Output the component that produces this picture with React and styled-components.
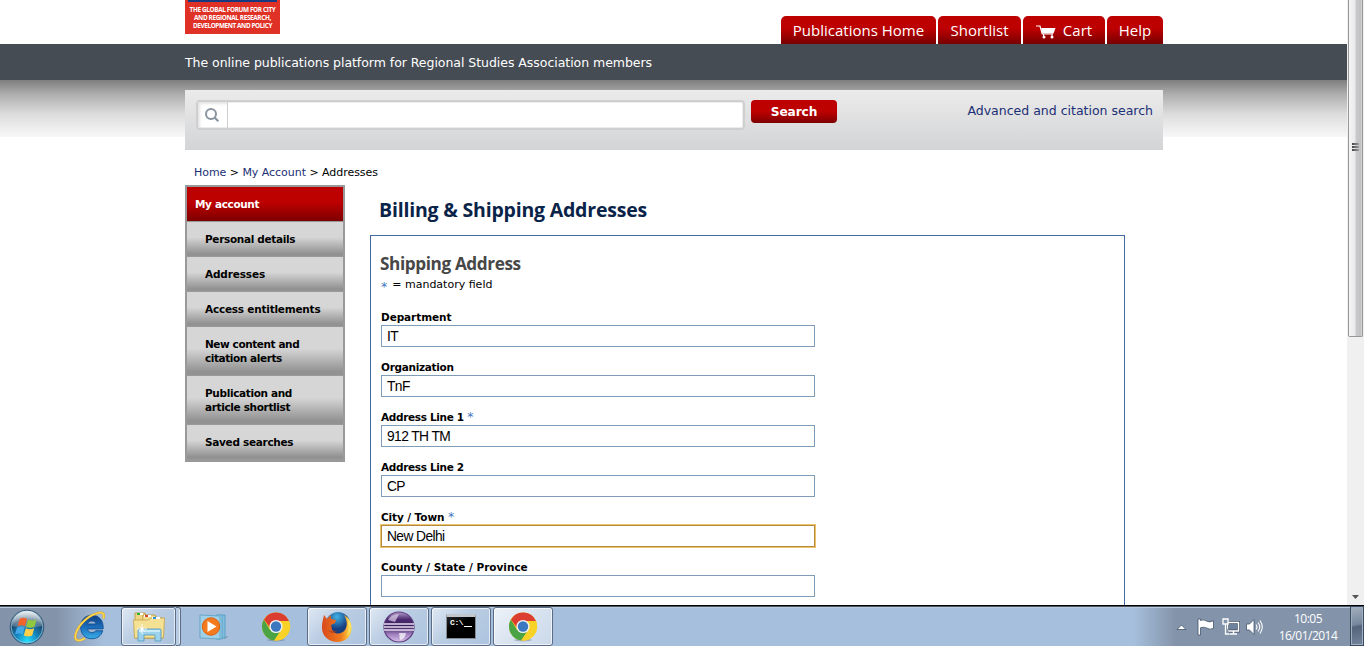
import React from "react";
import styled, { createGlobalStyle } from "styled-components";

const Global = createGlobalStyle`
  * { box-sizing: border-box; }
  body { margin: 0; background: #fff; overflow: hidden; font-family: "DejaVu Sans", sans-serif; }
  a { text-decoration: none; color: inherit; }
`;

const Screen = styled.div`
  width: 1364px;
  height: 666px;
  background: #fff;
  overflow: hidden;
`;
const Viewport = styled.div`
  display: flex;
  height: 605px;
  overflow: hidden;
`;
const Page = styled.div`
  width: 1347px;
  flex: none;
`;
const Container = styled.div`
  width: 978px;
  margin-left: 185px;
`;
const TopBar = styled(Container)`
  height: 44px;
  display: flex;
  justify-content: space-between;
  align-items: flex-start;
`;
const Logo = styled.div`
  width: 95px;
  height: 34px;
  background: #e03127;
  color: #fff;
  text-align: center;
  font: bold 6.4px/8px "Open Sans", sans-serif;
  padding: 0 3px;
  white-space: nowrap;
`;
const LogoRule = styled.div`
  height: 2px;
  background: #17397f;
  margin-bottom: 4px;
`;
const LogoLine = styled.div`
  letter-spacing: ${(p) => p.$ls || 0}px;
`;
const Nav = styled.nav`
  display: flex;
  gap: 2px;
  padding-top: 16px;
`;
const Tab = styled.a`
  width: ${(p) => p.$w}px;
  height: 28px;
  display: flex;
  align-items: center;
  justify-content: center;
  gap: 7px;
  padding-bottom: 1px;
  border-radius: 5px 5px 0 0;
  background: linear-gradient(#bd0000 0 45%, #7d0000 95%);
  color: #fff;
  font: 15px/20px "Open Sans", sans-serif;
  white-space: nowrap;
`;
const Strap = styled.div`
  height: 36px;
  background: #464c54;
  color: #fff;
  font-size: 12.5px;
  line-height: 37px;
  padding-left: 185px;
  letter-spacing: -0.04px;
`;
const SearchBand = styled.div`
  height: 70px;
  padding-top: 10px;
  background: linear-gradient(#7e7e7e, #adadad 14px, #dcdcdc 34px, #f8f8f8 57px, #fff 57px);
`;
const SearchPanel = styled(Container)`
  height: 60px;
  padding: 10px 10px 0 11px;
  display: flex;
  align-items: flex-start;
  background: linear-gradient(#ebebeb, #d3d4d6);
`;
const SearchField = styled.div`
  width: 549px;
  height: 30px;
  display: flex;
  border: 2px solid #cfcfcf;
  border-radius: 4px;
  background: #fff;
  box-shadow: inset 0 0 0 1px #ececec;
`;
const SearchIcon = styled.div`
  width: 30px;
  border-right: 1px solid #d0d0d0;
  box-shadow: inset 2px 2px 3px #e4e4e4;
  display: flex;
  align-items: center;
  justify-content: center;
  padding-right: 2px;
`;
const SearchButton = styled.div`
  width: 86px;
  height: 23px;
  margin-left: 6px;
  padding-top: 1px;
  border-radius: 4px;
  background: linear-gradient(#bd0000 0 50%, #7d0000);
  color: #fff;
  font: bold 12.2px/22px "DejaVu Sans", sans-serif;
  letter-spacing: -0.1px;
  text-align: center;
`;
const Advanced = styled.a`
  margin-left: auto;
  font-size: 12.5px;
  line-height: 22px;
  color: #1b2f75;
`;
const Crumbs = styled(Container)`
  height: 35px;
  padding: 15px 0 0 9px;
  font-size: 11px;
  line-height: 15px;
  color: #000;
  white-space: pre;
  letter-spacing: -0.04px;
  a { color: #1b2f75; }
`;
const Columns = styled(Container)`
  display: flex;
  align-items: flex-start;
`;
const Side = styled.ul`
  width: 160px;
  margin: 0;
  padding: 0;
  list-style: none;
  border: 2px solid #999;
`;
const SideItem = styled.li`
  padding: 10px 8px 10px ${(p) => (p.$head ? 8 : 18)}px;
  font-weight: bold;
  font-size: 10.5px;
  line-height: 14px;
  letter-spacing: ${(p) => p.$ls}px;
  white-space: pre;
  color: ${(p) => (p.$head ? "#fff" : "#000")};
  border-bottom: 1px solid #999;
  background: ${(p) =>
    p.$head
      ? "linear-gradient(#bd0000 0 45%, #7d0000)"
      : "linear-gradient(#d6d6d6 0 45%, #929292 93%, #929292)"};
`;
const Main = styled.main`
  width: 755px;
  margin-left: 25px;
`;
const Title = styled.h1`
  margin: 0;
  height: 50px;
  padding-left: 9px;
  font: bold 19.5px/50px "Open Sans", sans-serif;
  color: #0a2348;
  letter-spacing: -0.2px;
`;
const Panel = styled.section`
  border: 1px solid #416a9f;
  height: 420px;
  padding: 16px 10px 0;
`;
const Heading = styled.h2`
  margin: 0 0 0 -1px;
  font: bold 17.2px/24px "Open Sans", sans-serif;
  letter-spacing: -0.4px;
  color: #474747;
`;
const Note = styled.p`
  display: flex;
  gap: 5px;
  margin: 1px 0 17px;
  height: 16px;
  font-size: 11px;
  line-height: 16px;
`;
const Star = styled.span`
  color: #3f78c0;
  font-weight: normal;
  font-size: 12.5px;
  line-height: ${(p) => p.$lh || 12}px;
  letter-spacing: 0;
`;
const Field = styled.label`
  display: block;
  height: 50px;
`;
const Label = styled.div`
  height: 15px;
  font-weight: bold;
  font-size: 10.5px;
  line-height: 14px;
  letter-spacing: ${(p) => p.$ls}px;
`;
const Input = styled.div`
  width: 434px;
  height: 22px;
  border: 1px solid ${(p) => (p.$focus ? "#b58b3f" : "#7f9db9")};
  box-shadow: ${(p) => (p.$focus ? "0 0 0 1px #efc36c" : "none")};
  padding-left: 5px;
  font: 13.8px/21px "Liberation Sans", sans-serif;
  letter-spacing: -0.6px;
  color: #000;
`;
const ScrollTrack = styled.div`
  width: 17px;
  background: #f0f0f0;
  display: flex;
  flex-direction: column;
  align-items: center;
  justify-content: space-between;
`;
const Thumb = styled.div`
  width: 15px;
  height: 337px;
  border: 1px solid #979797;
  border-top: 0;
  border-radius: 0 0 2px 2px;
  background: linear-gradient(90deg, #f5f5f5, #e9e9eb 45%, #c9c9cc 55%, #c2c2c5 90%, #dcdcdc);
  display: flex;
  flex-direction: column;
  align-items: center;
  gap: 1px;
  padding-top: 143px;
`;
const Grip = styled.i`
  width: 7px;
  height: 2px;
  background: linear-gradient(90deg, #444, #a0a0a0);
`;
const Taskbar = styled.div`
  display: flex;
  height: 41px;
  border-top: 1px solid #000;
  box-shadow: inset 0 1px 0 #4a5463, inset 0 2px 0 #bccbdc;
  background: linear-gradient(90deg, #8393a9 0 56px, #a5bfdc 104px 1134px, #8393a9 1176px);
`;
const Slot = styled.div`
  width: ${(p) => p.$w}px;
  flex: none;
  display: flex;
  align-items: center;
  justify-content: center;
  padding-top: 2px;
  padding-left: ${(p) => p.$shift || 0}px;
`;
const TaskButton = styled(Slot)`
  height: 39px;
  margin: 1px 1px 0;
  padding-top: 1px;
  border: 1px solid #5b6c84;
  border-radius: 3px;
  box-shadow: inset 0 0 0 1px rgba(255, 255, 255, 0.65);
  background: ${(p) =>
    p.$active
      ? "linear-gradient(135deg, #eef3f9, #d9e3f0 50%, #cbd9ea)"
      : "linear-gradient(135deg, #dfe8f3, #b9cce2 45%, #adc4df)"};
`;
const StackEdge = styled.div`
  width: 5px;
  height: 39px;
  margin: 1px 0 0 -1px;
  border: 1px solid #5b6c84;
  border-left: 0;
  border-radius: 0 3px 3px 0;
  background: #b7cbe2;
  box-shadow: inset -1px 0 0 rgba(255, 255, 255, 0.6);
`;
const Tray = styled.div`
  margin-left: auto;
  display: flex;
  align-items: center;
`;
const Clock = styled.div`
  width: 87px;
  margin-top: 2px;
  padding-left: 3px;
  text-align: center;
  color: #fff;
  font: 12px/17px "Open Sans", sans-serif;
  letter-spacing: -0.5px;
`;
const ShowDesktop = styled.div`
  width: 14px;
  height: 40px;
  border: 1px solid #39495f;
  box-shadow: inset 0 0 0 1px #a3b0c2;
  background: linear-gradient(170deg, #a2aebd, #77889d 46%, #53647b 52%, #73859c);
`;

const CartSvg = styled.svg`
  margin-top: 5px;
`;
const Cart = () => (
  <CartSvg width="20" height="14" viewBox="0 0 20 14">
    <path d="M0 1h4l2.200 8H17" fill="none" stroke="#fff" strokeWidth="1.200" />
    <path d="M5 3h14.500l-2 5.500H6.500z" fill="#fff" />
    <path d="M7.500 9v2M16 9v2" stroke="#fff" />
    <circle cx="8" cy="12" r="1.500" fill="#fff" />
    <circle cx="16" cy="12" r="1.500" fill="#fff" />
  </CartSvg>
);
const Lens = () => (
  <svg width="16" height="16" viewBox="0 0 16 16" fill="none" stroke="#89949f">
    <circle cx="7" cy="7" r="5" strokeWidth="2" />
    <path d="M10.500 10.500l3.800 3.800" strokeWidth="2.200" />
  </svg>
);
const StartOrb = () => (
  <svg width="36" height="36" viewBox="0 0 36 36">
    <defs>
      <radialGradient id="orb" cx="50%" cy="92%" r="85%">
        <stop offset="0" stopColor="#23e0ff" />
        <stop offset=".4" stopColor="#1583bd" />
        <stop offset=".75" stopColor="#1c4569" />
        <stop offset="1" stopColor="#8da9ba" />
      </radialGradient>
      <linearGradient id="orbTop" x1="0" y1="0" x2="0" y2="1">
        <stop offset="0" stopColor="#fff" stopOpacity=".75" />
        <stop offset="1" stopColor="#fff" stopOpacity=".15" />
      </linearGradient>
    </defs>
    <circle cx="18" cy="18" r="16.800" fill="url(#orb)" stroke="#345875" />
    <circle cx="18" cy="18" r="15.800" fill="none" stroke="#a4d3e5" strokeOpacity=".7" />
    <path d="M3 17a15 15 0 0 1 30 0q-15 4-30 0z" fill="url(#orbTop)" />
    <path d="M10.500 10q4-2.500 7.500 0l-2 7.300q-3.500-2.300-7.500 0z" fill="#f0642c" />
    <path d="M19 10.500q4 2.200 8.500 0l-2 7.300q-4 2-8.500 0z" fill="#92c83e" />
    <path d="M8 18.600q4-2.300 7.600 0l-2 7q-3.500-2.300-7.600 0z" fill="#41a9e8" />
    <path d="M16.800 19.200q4 2.200 8.400 0l-2 7.300q-4 2-8.400 0z" fill="#fdd04a" />
  </svg>
);
const Explorer = () => (
  <svg width="34" height="32" viewBox="0 0 34 32">
    <path d="M3 2h10l1 3h10v22H3z" fill="#efd583" stroke="#b8963a" strokeWidth=".8" />
    <path d="M11 4h12l1 3h7v20H9z" fill="#f4df93" stroke="#b8963a" strokeWidth=".8" />
    <path d="M1.500 9h15l2-2h14l-1 20H2.500z" fill="#f5e193" stroke="#c3a24b" strokeWidth=".8" />
    <path d="M5 2h6v2H5zM12 4h7v2h-7zM20 6h8v2h-8z" fill="#fff" />
    <path d="M5 2h3v2H5z" fill="#2daf36" />
    <path d="M13 4h3v2h-3z" fill="#d8442c" />
    <path d="M21 6h3v2h-3z" fill="#2f8fd8" />
    <path d="M6 30V19q0-1 1-1h21q1 0 1 1v11h-6v-6H12v6z" fill="#9bd2ec" stroke="#5c9dbf" strokeWidth=".9" />
    <path d="M7 20h21" stroke="#d9f2fb" strokeWidth="1.500" />
    <path d="M10 13v10M5 18h10" stroke="#fff" strokeWidth=".9" />
    <path d="M7 15l6 6M13 15l-6 6" stroke="#fff" strokeWidth=".5" />
    <circle cx="10" cy="18" r="1.500" fill="#fff" />
  </svg>
);
const IE = () => (
  <svg width="32" height="32" viewBox="0 0 34 34">
    <defs>
      <linearGradient id="ie" x1="0" y1="0" x2="0" y2="1">
        <stop offset="0" stopColor="#123f80" />
        <stop offset=".5" stopColor="#1b6cba" />
        <stop offset="1" stopColor="#38aee8" />
      </linearGradient>
    </defs>
    <path
      d="M19 4.500C11.500 4.500 7 10 7 16.800 7 24.500 12 29.500 19 29.500c5.500 0 10-3 11.500-8.500h-7.500c-1 1.500-2.300 2-4 2-2.600 0-4.200-1.500-4.500-4H31C31.500 10.500 27 4.500 19 4.500zm-4.500 9.300c.5-2 2.200-3.200 4.500-3.200s4 1.200 4.500 3.200z"
      fill="url(#ie)"
      stroke="#0f4d93"
      strokeWidth=".9"
    />
    <path
      d="M31 8c2.500-5-1-8-8-5C13 6 3 17 1.500 26c-1 6 4 7 10 3"
      fill="none"
      stroke="#d69f25"
      strokeWidth="2.600"
    />
    <path
      d="M31 8c2.500-5-1-8-8-5C13 6 3 17 1.500 26c-1 6 4 7 10 3"
      fill="none"
      stroke="#fbdc55"
      strokeWidth="1.500"
    />
  </svg>
);
const MediaPlayer = () => (
  <svg width="32" height="28" viewBox="0 0 32 28">
    <path d="M22 24l8-1-4 3z" fill="#60748b" opacity=".4" />
    <path d="M20 2h6v23h-6z" fill="#83bfdd" stroke="#4e9bc3" strokeWidth=".8" />
    <path d="M17 2h6v24h-6z" fill="#9bd0e8" stroke="#4e9bc3" strokeWidth=".8" />
    <path d="M1 2l20 1v23L1 25z" fill="#9fd0e7" stroke="#559fc5" strokeWidth=".8" />
    <circle cx="12" cy="13.500" r="8.700" fill="#f37a1f" stroke="#dc600d" />
    <path d="M8.500 8v11l9-5.500z" fill="#fff" />
  </svg>
);
const Chrome = () => (
  <svg width="30" height="30" viewBox="0 0 30 30">
    <ellipse cx="15" cy="28" rx="9" ry="1.500" fill="#506078" opacity=".35" />
    <circle cx="15" cy="14.500" r="14" fill="#f7cf24" />
    <path d="M2.880 7.500 A14 14 0 0 0 13.200 28.400 L20.500 17.800 15 14.500 9 18z" fill="#4aa446" />
    <path d="M13.200 28.400 A14 14 0 0 0 28 9 H15 V14.500 L20.600 17.500z" fill="#f8d227" />
    <path d="M3 7.500 A14 14 0 0 1 28 9 H15 a6 6 0 0 0-5.800 7z" fill="#db3d30" />
    <circle cx="15" cy="14.500" r="6.600" fill="#f4f4f4" />
    <circle cx="15" cy="14.500" r="5.200" fill="#3c78bf" />
  </svg>
);
const Firefox = () => (
  <svg width="32" height="32" viewBox="0 0 32 32">
    <defs>
      <linearGradient id="fox" x1="0" y1="0" x2="1" y2="0">
        <stop offset="0" stopColor="#d9491c" />
        <stop offset=".65" stopColor="#ef7d1d" />
        <stop offset="1" stopColor="#fde04a" />
      </linearGradient>
      <radialGradient id="globe" cx="45%" cy="20%">
        <stop offset="0" stopColor="#41b1e4" />
        <stop offset="1" stopColor="#153f83" />
      </radialGradient>
    </defs>
    <circle cx="17" cy="13" r="12" fill="url(#globe)" />
    <path
      d="M3 4l3 4 4-4v4l5 1-1 3-4 2c1 2 0 4 2 6 3 4 9 3 12-1 3-5 2-10-1-15 5 3 8 8 7.500 14C30 26 24 31 16.500 31 8 31 1 25 1 17 1 11 2 9 3 4z"
      fill="url(#fox)"
    />
    <path d="M7 19c3 2 6 0 9 1-3 3-6 3-9-1z" fill="#a63816" opacity=".6" />
    <path d="M26 6c5 5 5 14 0 19 2-6 2-13 0-19z" fill="#fce56a" opacity=".8" />
  </svg>
);
const Eclipse = () => (
  <svg width="32" height="32" viewBox="0 0 32 32">
    <defs>
      <linearGradient id="ecl" x1="0" y1="0" x2="0" y2="1">
        <stop offset="0" stopColor="#b29bc7" />
        <stop offset=".25" stopColor="#4c2a70" />
        <stop offset=".5" stopColor="#3b1d5c" />
        <stop offset=".75" stopColor="#a382c2" />
        <stop offset="1" stopColor="#d5c1e6" />
      </linearGradient>
    </defs>
    <circle cx="16" cy="16" r="15" fill="url(#ecl)" stroke="#5f3d80" strokeWidth="1.200" />
    <path d="M5 9Q8 3 16 3l-4 8z" fill="#e9dff2" opacity=".65" />
    <path d="M1 13h30M1 16h30M1 19h30" stroke="#e6dbf0" strokeWidth="1.300" />
    <path d="M16 22h7q-1 6-6 7z" fill="#fff" opacity=".7" />
  </svg>
);
const PromptIcon = styled.div`
  width: 30px;
  height: 25px;
  margin-top: -2px;
  border: 1px solid #858b92;
  border-top: 3px solid #c1c7cd;
  background: linear-gradient(150deg, #242424, #000 40%);
  color: #fff;
  font: bold 8px/12px "Liberation Mono", monospace;
  padding-left: 3px;
  letter-spacing: -0.4px;
  white-space: nowrap;
  display: flex;
`;
const Cursor = styled.i`
  width: 8px;
  height: 1px;
  margin: 9px 0 0 1px;
  background: #fff;
`;
const TrayIcons = () => (
  <svg width="90" height="24" viewBox="0 -2 90 24">
    <g fill="#fff" stroke="#44546a" strokeWidth=".8">
      <path d="M4 13.500l4.500-4.500 4.500 4.500z" />
      <path d="M25 3h2.500v1.500q3-1.500 6 .5 3 2 7-.3v7.800q-4 1.500-7-.5-3-1.500-6-.2V19H25z" />
    </g>
    <path d="M54.500 6.500h11v8.500h-11z" fill="#6f829b" stroke="#44546a" strokeWidth="3" />
    <path d="M54.500 6.500h11v8.500h-11zM57 18h7M60.500 15v3" fill="none" stroke="#fff" strokeWidth="1.500" />
    <path d="M50 3h5v5h-5zM52.500 8v10h4" fill="#8393a9" stroke="#fff" strokeWidth="1.300" />
    <path d="M73.500 8h3l4.500-4.500v15L76.500 14h-3z" fill="#fff" stroke="#44546a" strokeWidth=".8" />
    <path d="M83 8.500q2 2.500 0 5M85 6.500q3.500 4.500 0 9M87 4.500q4.500 6.500 0 13" fill="none" stroke="#fff" strokeWidth="1.100" />
  </svg>
);
const ArrowDown = () => (
  <svg width="9" height="16" viewBox="0 0 9 16">
    <path d="M1 6h7L4.500 10z" fill="#555" />
  </svg>
);

const sideItems = [
  ["Personal details", -0.33],
  ["Addresses", -0.15],
  ["Access entitlements", -0.22],
  ["New content and\ncitation alerts", -0.42],
  ["Publication and\narticle shortlist", -0.35],
  ["Saved searches", -0.3],
];
const fields = [
  { label: "Department", value: "IT", ls: -0.08 },
  { label: "Organization", value: "TnF", ls: -0.3 },
  { label: "Address Line 1", value: "912 TH TM", required: true, ls: -0.33 },
  { label: "Address Line 2", value: "CP", ls: -0.33 },
  { label: "City / Town", value: "New Delhi", required: true, focus: true, ls: -0.1 },
  { label: "County / State / Province", value: "", ls: -0.02 },
];

export default function App() {
  return (
    <Screen>
      <Global />
      <Viewport>
        <Page>
          <TopBar>
            <Logo>
              <LogoRule />
              <LogoLine $ls={-0.36}>THE GLOBAL FORUM FOR CITY</LogoLine>
              <LogoLine $ls={-0.36}>AND REGIONAL RESEARCH,</LogoLine>
              <LogoLine $ls={-0.4}>DEVELOPMENT AND POLICY</LogoLine>
            </Logo>
            <Nav>
              <Tab $w={155}>Publications Home</Tab>
              <Tab $w={83}>Shortlist</Tab>
              <Tab $w={82}>
                <Cart />
                Cart
              </Tab>
              <Tab $w={56}>Help</Tab>
            </Nav>
          </TopBar>
          <Strap>The online publications platform for Regional Studies Association members</Strap>
          <SearchBand>
            <SearchPanel>
              <SearchField>
                <SearchIcon>
                  <Lens />
                </SearchIcon>
              </SearchField>
              <SearchButton>Search</SearchButton>
              <Advanced>Advanced and citation search</Advanced>
            </SearchPanel>
          </SearchBand>
          <Crumbs>
            <a>Home</a> &gt; <a>My Account</a> &gt; Addresses
          </Crumbs>
          <Columns>
            <Side>
              <SideItem $head $ls={-0.35}>
                My account
              </SideItem>
              {sideItems.map(([text, ls]) => (
                <SideItem key={text} $ls={ls}>
                  {text}
                </SideItem>
              ))}
            </Side>
            <Main>
              <Title>Billing &amp; Shipping Addresses</Title>
              <Panel>
                <Heading>Shipping Address</Heading>
                <Note>
                  <Star $lh={19}>*</Star>= mandatory field
                </Note>
                {fields.map((f) => (
                  <Field key={f.label}>
                    <Label $ls={f.ls}>
                      {f.label} {f.required && <Star>*</Star>}
                    </Label>
                    <Input $focus={f.focus}>{f.value}</Input>
                  </Field>
                ))}
              </Panel>
            </Main>
          </Columns>
        </Page>
        <ScrollTrack>
          <Thumb>
            <Grip />
            <Grip />
            <Grip />
          </Thumb>
          <ArrowDown />
        </ScrollTrack>
      </Viewport>
      <Taskbar>
        <Slot $w={54}>
          <StartOrb />
        </Slot>
        <Slot $w={66} $shift={6}>
          <IE />
        </Slot>
        <TaskButton $w={55}>
          <Explorer />
        </TaskButton>
        <StackEdge />
        <Slot $w={65} $shift={2}>
          <MediaPlayer />
        </Slot>
        <Slot $w={60}>
          <Chrome />
        </Slot>
        <TaskButton $w={60}>
          <Firefox />
        </TaskButton>
        <TaskButton $w={60}>
          <Eclipse />
        </TaskButton>
        <TaskButton $w={60}>
          <PromptIcon>
            C:\
            <Cursor />
          </PromptIcon>
        </TaskButton>
        <TaskButton $w={60} $active>
          <Chrome />
        </TaskButton>
        <Tray>
          <TrayIcons />
          <Clock>
            10:05
            <br />
            16/01/2014
          </Clock>
          <ShowDesktop />
        </Tray>
      </Taskbar>
    </Screen>
  );
}
